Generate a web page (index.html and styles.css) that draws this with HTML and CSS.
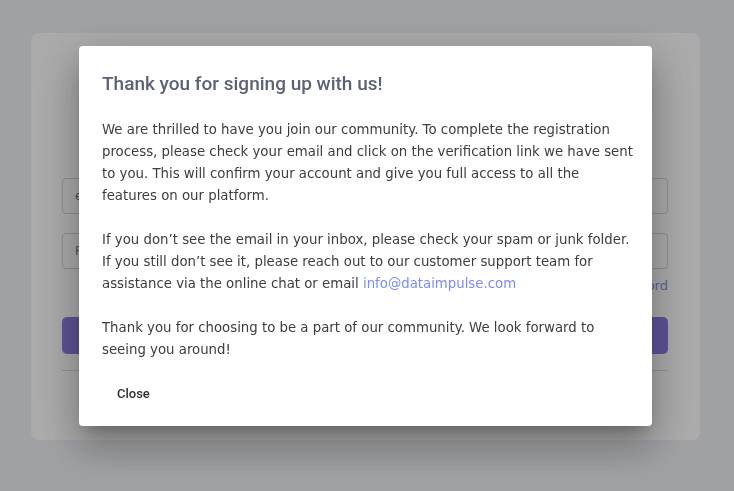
FILE: index.html
```html
<!DOCTYPE html>
<html lang="en">
<head>
<meta charset="utf-8">
<title>Sign up</title>
<link rel="stylesheet" href="styles.css">
</head>
<body>
<div class="card">
  <form class="form">
    <div class="field"><span class="ph">email</span></div>
    <div class="field"><span class="ph">Password</span></div>
    <div class="forgot"><a href="#">Forgot password</a></div>
    <button type="button" class="submit">Sign up</button>
    <div class="divider"></div>
  </form>
</div>

<div class="overlay">
  <div class="modal" role="dialog">
    <h2 class="modal-title">Thank you for signing up with us!</h2>
    <div class="modal-body">
      <p>We are thrilled to have you join our community. To complete the registration process, please check your email and click on the verification link we have sent to you. This will confirm your account and give you full access to all the features on our platform.</p>
      <p>If you don’t see the email in your inbox, please check your spam or junk folder. If you still don’t see it, please reach out to our customer support team for assistance via the online chat or email <a href="#" class="mail">info@dataimpulse.com</a></p>
      <p>Thank you for choosing to be a part of our community. We look forward to seeing you around!</p>
    </div>
    <div class="modal-actions">
      <button type="button" class="close-btn">Close</button>
    </div>
  </div>
</div>
</body>
</html>
```

FILE: styles.css
```css
* { box-sizing: border-box; }
html, body { height: 100%; }
body {
  margin: 0;
  background: #eef1f5;
  font-family: "DejaVu Sans", "Open Sans", sans-serif;
  overflow: hidden;
}
.card {
  margin: 33px 0 0 31px;
  width: 669px;
  height: 407px;
  background: #ffffff;
  border-radius: 8px;
  padding: 145px 32px 0 31px;
}
.form {
  display: flex;
  flex-direction: column;
}
.field {
  height: 36px;
  border: 1px solid #d6d6d6;
  border-radius: 4px;
  margin-bottom: 19px;
  display: flex;
  align-items: center;
  padding-left: 12px;
  font-size: 12px;
  color: #777;
}
.forgot {
  text-align: right;
  font-size: 13px;
  margin-top: -10px;
  height: 18px;
}
.forgot a { color: #7f97ee; text-decoration: none; }
.submit {
  margin-top: 21px;
  height: 37px;
  border: 0;
  border-radius: 5px;
  background: #8e7ce3;
  color: #fff;
  font-size: 14px;
}
.divider {
  margin-top: 16px;
  height: 1px;
  background: #dcdcdc;
}
.overlay {
  position: fixed;
  inset: 0;
  background: rgba(0, 0, 0, 0.33);
  padding: 46px 0 0 79px;
}
.modal {
  width: 573px;
  height: 380px;
  background: #fff;
  border-radius: 4px;
  box-shadow: 0 11px 15px -7px rgba(0,0,0,0.25), 0 24px 38px 3px rgba(0,0,0,0.16), 0 9px 46px 8px rgba(0,0,0,0.14);
  padding: 24px 18px 0 23px;
  display: flex;
  flex-direction: column;
}
.modal-title {
  margin: 0 0 21px;
  font-family: Roboto, "Liberation Sans", sans-serif;
  font-weight: 500;
  font-size: 19px;
  line-height: 28px;
  color: #5b6276;
}
.modal-body {
  width: 531px;
  font-size: 13.3px;
  line-height: 22px;
  color: #3d3d3d;
}
.modal-body p { margin: 0 0 22px; }
.modal-body p:last-child { margin-bottom: 0; }
.mail { color: #7b8bff; text-decoration: none; }
.modal-actions {
  margin-top: 14px;
  display: flex;
}
.close-btn {
  border: 0;
  background: transparent;
  font-family: Roboto, "Liberation Sans", sans-serif;
  font-weight: 500;
  font-size: 13px;
  color: #2f2f2f;
  padding: 8px 15px;
  height: 36px;
}
```
